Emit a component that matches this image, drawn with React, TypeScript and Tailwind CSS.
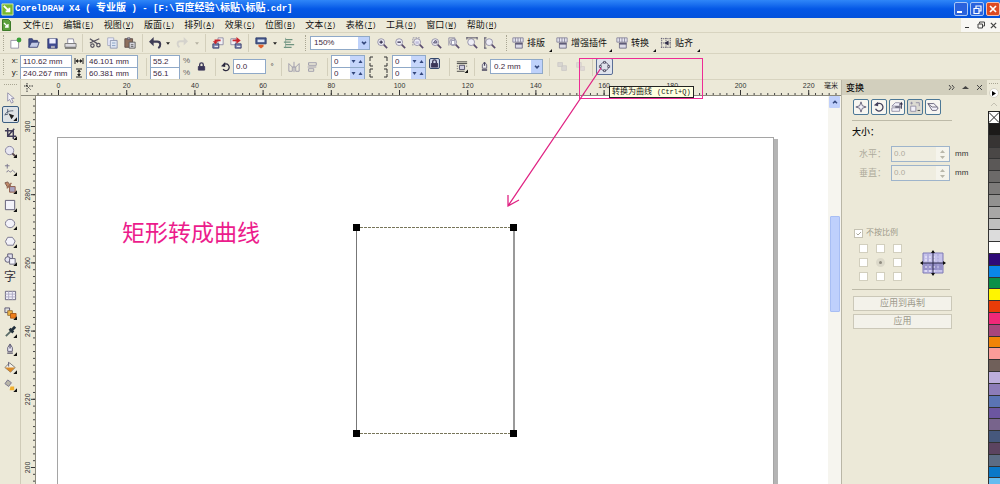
import React, { useState } from "react";

const menus = [
  ["文件", "F"],
  ["编辑", "E"],
  ["视图", "V"],
  ["版面", "L"],
  ["排列", "A"],
  ["效果", "C"],
  ["位图", "B"],
  ["文本", "X"],
  ["表格", "T"],
  ["工具", "O"],
  ["窗口", "W"],
  ["帮助", "H"],
];

const swatches = [
  "#1c1a19",
  "#373433",
  "#4a4746",
  "#5b5857",
  "#6c6a69",
  "#7d7b7a",
  "#929190",
  "#a8a7a6",
  "#c0c0bf",
  "#dcdcdc",
  "#ffffff",
  "#2f0a78",
  "#0a86e8",
  "#0a9048",
  "#fff500",
  "#e83c08",
  "#f02878",
  "#a8467c",
  "#f08408",
  "#fa9c98",
  "#70605a",
  "#bcaedc",
  "#8c7cb8",
  "#5a74b4",
  "#6c56a0",
  "#78648c",
  "#46587c",
  "#5c4460",
  "#5c6c84",
  "#0a78c8",
  "#64bcf0",
];

// Small drawing helpers

type IconProps = { children: React.ReactNode; size?: string; box?: string };

function Icon({ children, size = "size-[14px]", box = "0 0 14 14" }: IconProps) {
  return (
    <svg viewBox={box} className={`${size} shrink-0 overflow-visible`} fill="none" stroke="#5b5872" aria-hidden="true">
      {children}
    </svg>
  );
}

function Tool({ label, children, width = "w-[18px]" }: { label: string; children: React.ReactNode; width?: string }) {
  return (
    <button type="button" aria-label={label} className={`${width} h-[18px] shrink-0 flex items-center justify-center`}>
      {children}
    </button>
  );
}

function Sep() {
  return <span className="w-px h-[18px] mx-[3px] shrink-0 bg-[#d3cfbb]" />;
}

function Grip() {
  return <span className="h-[16px] mx-[3px] shrink-0 border-l border-dotted border-[#a9a693]" />;
}

function Caret({ faded }: { faded?: boolean }) {
  return (
    <svg viewBox="0 0 5 3" className="w-[4px] h-[3px] shrink-0" aria-hidden="true">
      <path d="M0 0h5L2.5 3z" fill={faded ? "#b5b2a2" : "#222"} />
    </svg>
  );
}

const tri = <path d="M14 10v4h-4z" fill="#111" stroke="none" />;

const magnifier = (
  <>
    <circle cx="6" cy="6" r="4" fill="#eeedf6" stroke="#8d8aa2" />
    <path d="M9 9l4 4" stroke="#5c4f70" strokeWidth="2" />
  </>
);

function ZoomTool({ label, children }: { label: string; children: React.ReactNode }) {
  return (
    <Tool label={label}>
      <Icon size="size-[12px]">
        {magnifier}
        {children}
      </Icon>
    </Tool>
  );
}

const gridIcon = (
  <Icon size="size-[12px]">
    <path d="M1 1h12v5H1z" fill="#e6e6ef" stroke="#85829a" />
    <path d="M4 1v5M7 1v5M10 1v5" stroke="#85829a" />
    <path d="M4 7h8v6H4z" fill="#dcdbe8" stroke="#6c6984" />
    <path d="M4 8h8" stroke="#4a4766" strokeWidth="1.5" />
  </Icon>
);

// Title bar and menu

function TitleBar() {
  return (
    <header className="h-[18px] shrink-0 flex items-center pl-px bg-linear-to-b from-[#2f86f8] via-[#0457e6] to-[#0352dc]">
      <Icon size="size-[13px]">
        <path d="M1 1h12v12H1z" fill="#7ab82e" stroke="#d8efb0" />
        <path d="M3 3l6 6M9 5v4H5" stroke="#fff" strokeWidth="2" />
      </Icon>
      <h1 className="flex-1 pl-px flex items-center whitespace-pre font-['Liberation_Mono','Noto_Sans_CJK_SC',monospace] font-bold text-[9px] leading-[14px] text-white">
        CorelDRAW X4 ( <span className="text-[10px]">专业版</span> ) - [F:\<span className="text-[10px]">百度经验</span>\
        <span className="text-[10px]">标贴</span>\<span className="text-[10px]">标贴</span>.cdr]
      </h1>
      <div className="flex gap-[2px]">
        <button type="button" aria-label="最小化" className="size-[14px] rounded-[2px] border border-[#a9c6f5] bg-[#2a62dd] flex items-end p-[2px]">
          <span className="w-[5px] h-[2px] bg-white" />
        </button>
        <button type="button" aria-label="还原" className="size-[14px] rounded-[2px] border border-[#a9c6f5] bg-[#2a62dd] flex items-center justify-center">
          <Icon size="size-[9px]" box="0 0 9 9">
            <path d="M3 3V1h5v5H6M1 3.5h5v5H1z" stroke="#fff" strokeWidth="1.2" />
          </Icon>
        </button>
        <button type="button" aria-label="关闭" className="size-[14px] rounded-[2px] border border-[#f3c0b0] bg-[#dd4a22] flex items-center justify-center">
          <Icon size="size-[8px]" box="0 0 8 8">
            <path d="M1 1l6 6M7 1L1 7" stroke="#fff" strokeWidth="1.7" />
          </Icon>
        </button>
      </div>
    </header>
  );
}

function MenuBar() {
  return (
    <nav className="h-[15px] shrink-0 flex items-center border-b border-[#d8d4c0]">
      <Icon size="w-[9px] h-[12px] ml-[2px]" box="0 0 9 12">
        <path d="M.5 .5h6l2 2v9h-8z" fill="#5ca03c" stroke="#3c7a28" />
        <path d="M2 4l4 4M6 5v3H3" stroke="#fff" strokeWidth="1.3" />
      </Icon>
      <div className="ml-[12px] w-[484px] grid grid-cols-12">
        {menus.map(([name, key]) => (
          <button key={key} type="button" className="flex items-center text-[9px] leading-[14px] text-[#111]">
            {name}
            <span className="font-['Liberation_Mono',monospace] text-[7px]">
              (<u>{key}</u>)
            </span>
          </button>
        ))}
      </div>
      <div className="ml-auto h-full flex bg-[#f8f7f3]">
        <button type="button" aria-label="最小化文档" className="w-[13px] flex items-center justify-center">
          <Icon size="size-[8px]" box="0 0 8 8">
            <path d="M1 6.5h4" stroke="#333" />
          </Icon>
        </button>
        <button type="button" aria-label="还原文档" className="w-[13px] flex items-center justify-center">
          <Icon size="size-[8px]" box="0 0 8 8">
            <path d="M2.5 2.5V1h5v4H6M1 3h4.500v4H1z" stroke="#444" />
          </Icon>
        </button>
        <button type="button" aria-label="关闭文档" className="w-[13px] flex items-center justify-center">
          <Icon size="size-[7px]" box="0 0 8 8">
            <path d="M1 1l6 6M7 1L1 7" stroke="#444" strokeWidth="1.5" />
          </Icon>
        </button>
      </div>
    </nav>
  );
}

// Standard toolbar

function StandardBar() {
  const [zoom, setZoom] = useState("150%");

  return (
    <div className="h-[21px] shrink-0 flex items-center border-b border-[#d8d4c0]">
      <Grip />
      <Tool label="新建">
        <Icon size="size-[12px]">
          <path d="M1 4h9v9H1z" fill="#fff" stroke="#8d8aa0" />
          <circle cx="10.500" cy="3.500" r="2.800" fill="#3da03a" stroke="none" />
        </Icon>
      </Tool>
      <Tool label="打开">
        <Icon size="size-[12px]">
          <path d="M1 12V2h4l1 2h5v2" fill="#44518c" stroke="#333c70" />
          <path d="M1 12l3-6h9l-2 6z" fill="#c3cbe6" stroke="#333c70" />
        </Icon>
      </Tool>
      <Tool label="保存">
        <Icon size="size-[11px]">
          <path d="M1 1h12v12H1z" fill="#3f4a92" stroke="#2b3468" />
          <path d="M3 1h8v6H3z" fill="#eef" stroke="none" />
          <path d="M5 10h5v3H5z" fill="#aab" stroke="none" />
        </Icon>
      </Tool>
      <Tool label="打印">
        <Icon size="size-[13px]">
          <path d="M4 7V2h6l1 5" fill="#fff" stroke="#8d8aa0" />
          <path d="M1 7h12v4H1z" fill="#dddce0" stroke="#777" />
          <path d="M1 12h12" stroke="#444" />
        </Icon>
      </Tool>
      <Sep />
      <Tool label="剪切" width="w-[17px]">
        <Icon size="size-[12px]">
          <path d="M1 2l9 6M1 7l11-5" stroke="#55525f" strokeWidth="1.5" />
          <circle cx="4" cy="10" r="2" stroke="#55525f" strokeWidth="1.400" />
          <circle cx="11" cy="9.500" r="2" stroke="#55525f" strokeWidth="1.400" />
        </Icon>
      </Tool>
      <Tool label="复制">
        <Icon size="size-[12px]">
          <path d="M2 1h7v9H2z" fill="#eef" stroke="#a3a9bd" />
          <path d="M5 4h8v9H5z" fill="#dfe6f2" stroke="#8791ab" />
          <path d="M7 7h4M7 10h4" stroke="#7f9cc0" />
        </Icon>
      </Tool>
      <Tool label="粘贴">
        <Icon size="size-[12px]">
          <path d="M1 2h9v10H1z" fill="#8d6f5c" stroke="#5c4c48" />
          <path d="M4 1h3v2H4z" fill="#bbb" />
          <path d="M6 6h7v7H6z" fill="#d8d8df" stroke="#555" />
          <path d="M8 9h3M8 11h3" stroke="#555" />
        </Icon>
      </Tool>
      <Sep />
      <Tool label="撤销">
        <Icon size="size-[13px]">
          <path d="M3 5h6c4 0 4 5 1 7" stroke="#3e3c55" strokeWidth="2.200" />
          <path d="M0 5l5-5v10z" fill="#3e3c55" stroke="none" />
        </Icon>
      </Tool>
      <Tool label="撤销列表" width="w-[8px]">
        <Caret />
      </Tool>
      <Tool label="重做" width="w-[20px]">
        <Icon size="size-[12px]">
          <path d="M11 5H5C1 5 1 10 4 12" stroke="#d4d2cc" strokeWidth="2.200" />
          <path d="M14 5L9 0v10z" fill="#d4d2cc" stroke="none" />
        </Icon>
      </Tool>
      <Tool label="重做列表" width="w-[10px]">
        <Caret faded />
      </Tool>
      <Sep />
      <Tool label="导入">
        <Icon size="size-[12px]">
          <path d="M7 1h6v8H7z" fill="#f1f0f5" stroke="#8b88a0" />
          <path d="M1 8h7v5H1z" fill="#8088b0" stroke="#353c6c" />
          <path d="M3 11h4" stroke="#fff" />
          <path d="M10 4H4v2" stroke="#c8242c" strokeWidth="2" />
          <path d="M1 5h6L4 8.500z" fill="#c8242c" stroke="none" />
        </Icon>
      </Tool>
      <Tool label="导出">
        <Icon size="size-[12px]">
          <path d="M1 2h6v7H1z" fill="#f1f0f5" stroke="#8b88a0" />
          <path d="M6 8h7v5H6z" fill="#8088b0" stroke="#353c6c" />
          <path d="M8 11h4" stroke="#fff" />
          <path d="M3 4h6" stroke="#c8242c" strokeWidth="2" />
          <path d="M7.500 0l5 4-5 4z" fill="#c8242c" stroke="none" />
        </Icon>
      </Tool>
      <Sep />
      <Tool label="应用程序启动器">
        <Icon size="size-[12px]">
          <path d="M1 1h12v7H1z" fill="#46598c" stroke="#2d3c6c" />
          <path d="M3 3h8v3H3z" fill="#dbe6f6" stroke="none" />
          <path d="M4 9h6v2L7 13.500 4 11z" fill="#e0602c" stroke="none" />
        </Icon>
      </Tool>
      <Tool label="启动器列表" width="w-[10px]">
        <Caret />
      </Tool>
      <Tool label="选项">
        <Icon size="size-[12px]">
          <path d="M3 1v12" stroke="#8fa89a" />
          <path d="M3 3h8M1 6h8M3 9h10M1 12h9" stroke="#6f9480" strokeWidth="1.400" />
        </Icon>
      </Tool>
      <span className="w-[4px]" />
      <Grip />
      <div className="relative w-[60px] h-[14px] shrink-0 ml-px border border-[#8fa9c8] bg-white">
        <select
          aria-label="缩放级别"
          value={zoom}
          onChange={(e) => setZoom(e.target.value)}
          className="block w-full h-full appearance-none pl-[3px] text-[8px] leading-[12px] text-[#3c2840]"
        >
          <option>100%</option>
          <option>150%</option>
          <option>200%</option>
        </select>
        <DropArrow />
      </div>
      <span className="w-[3px]" />
      <ZoomTool label="放大">
        <path d="M4 6h4M6 4v4" stroke="#35304f" strokeWidth="1.500" />
      </ZoomTool>
      <ZoomTool label="缩小">
        <path d="M4 6h4" stroke="#35304f" strokeWidth="1.500" />
      </ZoomTool>
      <ZoomTool label="缩放选定范围">
        <path d="M1 10V1h9" stroke="#8886a0" strokeDasharray="2 1" />
        <path d="M4 5h4v3H4z" fill="#c3c0dc" stroke="none" />
      </ZoomTool>
      <ZoomTool label="缩放全部对象">
        <path d="M4 7l2-3 2 1v2z" fill="#9c98bc" />
      </ZoomTool>
      <ZoomTool label="显示页面">
        <path d="M1 10V1h7v3" stroke="#8886a0" />
        <path d="M4 4h4v5H4z" fill="#fff" stroke="#8886a0" />
      </ZoomTool>
      <ZoomTool label="按页宽显示">
        <path d="M1 1h12M1 0v3M13 0v3" stroke="#403d58" />
      </ZoomTool>
      <ZoomTool label="按页高显示">
        <path d="M1 1v12M0 1h3M0 13h3" stroke="#403d58" />
      </ZoomTool>
      <span className="w-[4px]" />
      <Grip />
      <TextTool label="排版" width="w-[44px]" icon={gridIcon} />
      <TextTool label="增强插件" width="w-[60px]" icon={gridIcon} />
      <TextTool label="转换" width="w-[44px]" icon={gridIcon} />
      <TextTool
        label="贴齐"
        width="w-[44px]"
        icon={
          <Icon size="size-[12px]">
            <path d="M2 1v12M7 1v12M12 1v12M1 2h12M1 7h12M1 12h12" stroke="#56536a" strokeDasharray="1.500 1" />
            <path d="M5 7l5-3v6z" fill="#302d48" stroke="none" />
          </Icon>
        }
      />
    </div>
  );
}

function TextTool({ label, width, icon }: { label: string; width: string; icon: React.ReactNode }) {
  return (
    <button type="button" className={`${width} h-[18px] shrink-0 relative flex items-center gap-[3px] pl-[2px] text-[9px] leading-[12px] text-[#111] whitespace-nowrap`}>
      {icon}
      {label}
      <svg viewBox="0 0 3 3" className="absolute right-[2px] bottom-0 size-[3px]" aria-hidden="true">
        <path d="M3 0v3H0z" fill="#111" />
      </svg>
    </button>
  );
}

function DropArrow() {
  return (
    <span className="absolute right-0 top-0 bottom-0 w-[11px] flex items-center justify-center bg-[#bfd2fb] pointer-events-none">
      <svg viewBox="0 0 7 5" className="w-[6px] h-[4px]" fill="none" aria-hidden="true">
        <path d="M1 1l2.500 2.500L6 1" stroke="#33477c" strokeWidth="2" />
      </svg>
    </span>
  );
}

// Property bar

function Field({ label, value, width = "w-[52px]" }: { label: string; value: string; width?: string }) {
  return (
    <input
      type="text"
      aria-label={label}
      defaultValue={value}
      className={`${width} h-[13px] -mb-px shrink-0 border border-[#8fa9c8] bg-white pl-[2px] text-[8px] leading-[11px] text-[#3c2840]`}
    />
  );
}

function Spin({ label }: { label: string }) {
  return (
    <div className="w-[34px] h-[13px] -mb-px flex border border-[#8fa9c8] bg-white">
      <input type="text" aria-label={label} defaultValue="0" className="flex-1 min-w-0 pl-[2px] text-[8px] leading-[11px] text-[#3c2840]" />
      <button type="button" aria-label={`${label}减`} className="w-[7px] flex items-center justify-center bg-[#c6d6fb]">
        <svg viewBox="0 0 4 3" className="w-[5px] h-[3px]">
          <path d="M0 0h4L2 3z" fill="#33477c" />
        </svg>
      </button>
      <button type="button" aria-label={`${label}加`} className="w-[7px] flex items-center justify-center bg-[#c6d6fb]">
        <svg viewBox="0 0 4 3" className="w-[5px] h-[3px]">
          <path d="M0 3h4L2 0z" fill="#33477c" />
        </svg>
      </button>
    </div>
  );
}

const lockIcon = (
  <Icon size="size-[9px]" box="0 0 10 10">
    <path d="M3 5V3a2 2 0 014 0v2" stroke="#3a3658" strokeWidth="1.500" />
    <path d="M1.500 5h7v4h-7z" fill="#3a3658" stroke="#3a3658" />
  </Icon>
);

function PropertyBar() {
  const [width, setWidth] = useState("0.2 mm");

  return (
    <div className="h-[25px] shrink-0 flex items-center text-[8px] leading-[12px] text-[#222]">
      <Grip />
      <div className="w-[13px] pr-[2px] text-right">
        <p>x:</p>
        <p>y:</p>
      </div>
      <div className="flex flex-col">
        <Field label="x 位置" value="110.62 mm" />
        <Field label="y 位置" value="240.267 mm" />
      </div>
      <div className="w-[14px] flex flex-col items-center gap-[2px]">
        <Icon size="size-[10px]" box="0 0 10 10">
          <path d="M1 2v6M9 2v6M2 5h6" stroke="#222" />
          <path d="M1.500 5l2.500-2v4zM8.500 5L6 3v4z" fill="#222" stroke="none" />
        </Icon>
        <Icon size="size-[10px]" box="0 0 10 10">
          <path d="M2 1h6M2 9h6M5 2v6" stroke="#222" />
          <path d="M5 1.500L3 4h4zM5 8.500L3 6h4z" fill="#222" stroke="none" />
        </Icon>
      </div>
      <div className="flex flex-col">
        <Field label="宽度" value="46.101 mm" />
        <Field label="高度" value="60.381 mm" />
      </div>
      <span className="w-[5px]" />
      <Sep />
      <div className="flex flex-col">
        <Field label="水平缩放" value="55.2" width="w-[30px]" />
        <Field label="垂直缩放" value="56.1" width="w-[30px]" />
      </div>
      <div className="w-[13px] text-center text-[#666]">
        <p>%</p>
        <p>%</p>
      </div>
      <Tool label="锁定比例" width="w-[16px]">
        {lockIcon}
      </Tool>
      <span className="w-[3px]" />
      <Sep />
      <Tool label="旋转角度" width="w-[14px]">
        <Icon size="size-[10px]" box="0 0 12 12">
          <path d="M3 3.500a4 4 0 11-.5 5" stroke="#2c2a40" strokeWidth="1.500" />
          <path d="M0 5l5 1V0z" fill="#2c2a40" stroke="none" />
        </Icon>
      </Tool>
      <input
        type="text"
        aria-label="角度"
        defaultValue="0.0"
        className="w-[33px] h-[15px] border border-[#8fa9c8] bg-white pl-[2px] text-[8px] leading-[13px] text-[#3c2840]"
      />
      <span className="w-[12px] text-center">°</span>
      <Sep />
      <Tool label="水平镜像">
        <Icon size="size-[12px]">
          <path d="M1 3v9h4V7zM13 3v9H9V7zM7 1v12" stroke="#9694a6" />
          <path d="M5 7h4" stroke="#9694a6" />
        </Icon>
      </Tool>
      <Tool label="垂直镜像">
        <Icon size="size-[12px]">
          <path d="M2 7h10M3 2h9v3H3zM3 9h6v3H3z" stroke="#9694a6" />
        </Icon>
      </Tool>
      <span className="w-[3px]" />
      <Sep />
      <div className="flex flex-col">
        <Spin label="左上角圆滑度" />
        <Spin label="左下角圆滑度" />
      </div>
      <div className="w-[27px] flex justify-between px-[4px]">
        <Icon size="w-[4px] h-[22px]" box="0 0 4 22">
          <path d="M4 1H1v4M1 7v3h3M4 13H1v4M1 18v3h3" stroke="#333" />
        </Icon>
        <Icon size="w-[4px] h-[22px]" box="0 0 4 22">
          <path d="M0 1h3v4M3 7v3H0M0 13h3v4M3 18v3H0" stroke="#333" />
        </Icon>
      </div>
      <div className="flex flex-col">
        <Spin label="右上角圆滑度" />
        <Spin label="右下角圆滑度" />
      </div>
      <button type="button" aria-label="全部圆角" className="size-[11px] ml-[3px] mb-[6px] shrink-0 rounded-[2px] border border-[#34476c] bg-[#cfd8ea] flex items-center justify-center">
        {lockIcon}
      </button>
      <span className="w-[6px]" />
      <Sep />
      <Tool label="文本换行">
        <Icon size="size-[12px]">
          <path d="M1 1h12M1 3h12M1 12h9M1 6h1M1 9h1M12 6h1" stroke="#333" />
          <path d="M4 5h6v5H4z" fill="#cfcde0" stroke="#44415c" />
          {tri}
        </Icon>
      </Tool>
      <Sep />
      <Tool label="轮廓笔" width="w-[12px]">
        <Icon size="w-[7px] h-[11px]" box="0 0 8 12">
          <path d="M4 1L1.500 4v4h5V4z" fill="#eee" />
          <path d="M1 10h6M4 1v4" stroke="#44415c" strokeWidth="1.500" />
        </Icon>
      </Tool>
      <div className="relative w-[53px] h-[15px] shrink-0 border border-[#8fa9c8] bg-white">
        <select
          aria-label="轮廓宽度"
          value={width}
          onChange={(e) => setWidth(e.target.value)}
          className="block w-full h-full appearance-none pl-[3px] text-[8px] leading-[13px] text-[#3c2840]"
        >
          <option>0.1 mm</option>
          <option>0.2 mm</option>
          <option>0.5 mm</option>
        </select>
        <DropArrow />
      </div>
      <span className="w-[3px]" />
      <Sep />
      <Tool label="到图层前面">
        <Icon size="size-[11px]">
          <path d="M1 2h6v5H1zM6 6h6v6H6z" fill="#d9d6d2" stroke="#cbc8c6" />
        </Icon>
      </Tool>
      <Tool label="到图层后面">
        <Icon size="size-[11px]">
          <path d="M2 2h6v6H2zM7 7h5v5H7z" fill="#dfd9d6" stroke="#d5cecb" />
        </Icon>
      </Tool>
      <Sep />
      <button type="button" aria-label="转换为曲线" className="size-[17px] rounded-[2px] border border-[#5b6f96] bg-[#dfe3ec] flex items-center justify-center">
        <Icon size="size-[13px]">
          <circle cx="7" cy="7" r="4.500" stroke="#55526a" />
          <path d="M6 1.500h2v2H6zM6 10.500h2v2H6zM1.500 6h2v2h-2zM10.500 6h2v2h-2z" fill="#fff" stroke="#35324c" strokeWidth=".8" />
        </Icon>
      </button>
    </div>
  );
}

// Toolbox

function BoxTool({ label, flyout = true, active, children }: { label: string; flyout?: boolean; active?: boolean; children: React.ReactNode }) {
  return (
    <button
      type="button"
      aria-label={label}
      className={
        active
          ? "w-[17px] h-[17px] mb-px shrink-0 rounded-[2px] border border-[#3d5f82] bg-[#dfe3e6] flex items-center justify-center"
          : "w-[17px] h-[18px] shrink-0 flex items-center justify-center"
      }
    >
      <Icon size="size-[13px]">
        {children}
        {flyout && tri}
      </Icon>
    </button>
  );
}

function Toolbox() {
  return (
    <aside className="w-[21px] shrink-0 flex flex-col items-center border-r border-[#cfcbb8]">
      <span className="w-[13px] mt-[4px] mb-[3px] border-t border-dotted border-[#a9a693]" />
      <BoxTool label="挑选" flyout={false}>
        <path d="M4 2v9l2-2 2 4 2-1-2-4h3z" fill="#f2f1f8" stroke="#9592ac" />
      </BoxTool>
      <BoxTool label="形状" active>
        <path d="M1 8c1-4 4-5 9-5M4 1v5M1 7h3" stroke="#4e5c70" />
        <path d="M5 6l6 2-3 4z" fill="#222" stroke="none" />
      </BoxTool>
      <BoxTool label="裁剪">
        <path d="M4 1v9h9M1 4h9v9M11 2L4 10" stroke="#403c58" strokeWidth="1.600" />
      </BoxTool>
      <BoxTool label="缩放">
        <circle cx="6" cy="6" r="4.500" fill="#e8e7f2" stroke="#8683a0" />
        <path d="M9 9l4 4" stroke="#5a4a50" strokeWidth="2.200" />
      </BoxTool>
      <BoxTool label="手绘">
        <path d="M1 3h5M3.500 1v5M3 10c2-5 3 2 5-1s2 1 4 1" stroke="#77748c" />
      </BoxTool>
      <BoxTool label="智能填充">
        <path d="M1 2l3-1 3 4-3 2z" fill="#c08868" stroke="#7c5a4c" />
        <path d="M6 6h6v6H6z" fill="#a9a3c0" stroke="#8c5844" />
        <path d="M3 8l5-6" stroke="#9c6c54" strokeWidth="1.500" />
      </BoxTool>
      <BoxTool label="矩形">
        <path d="M1.500 1.500h10v10h-10z" fill="#f3f2fa" />
      </BoxTool>
      <BoxTool label="椭圆形">
        <ellipse cx="6.500" cy="7" rx="5" ry="4.500" fill="#f3f2fa" stroke="#77748c" />
      </BoxTool>
      <BoxTool label="多边形">
        <path d="M4 2.500h5l3 4-2 4.500H3.500L1.500 7z" fill="#f3f2fa" stroke="#77748c" />
      </BoxTool>
      <BoxTool label="基本形状">
        <path d="M4 1h5v5H4z" fill="#e3e2f0" />
        <circle cx="4" cy="7" r="3" fill="#e3e2f0" />
        <path d="M6 6h6v6H6z" fill="#f3f2fa" stroke="#66637c" />
      </BoxTool>
      <button type="button" aria-label="文本" className="w-[17px] h-[18px] shrink-0 text-[12px] leading-[18px] text-[#33303c]">
        字
      </button>
      <BoxTool label="表格" flyout={false}>
        <path d="M1.500 2.500h11v9h-11z" fill="#f3f2fa" stroke="#66637c" />
        <path d="M5 2.500v9M9 2.500v9M1.500 5.500h11M1.500 8.500h11" stroke="#aeabc4" />
      </BoxTool>
      <BoxTool label="交互式调和">
        <path d="M1 1h5v5H1z" fill="#ddd" />
        <path d="M4 4h5v5H4z" fill="#f0b848" stroke="#94703c" />
        <path d="M7 7h6v5H7z" fill="#ee7c18" stroke="#a85818" />
      </BoxTool>
      <BoxTool label="滴管">
        <path d="M2 12l6-6" stroke="#5a6c68" strokeWidth="2" />
        <path d="M6 4l4 4M8 6l4-4" stroke="#22303c" strokeWidth="3" />
      </BoxTool>
      <BoxTool label="轮廓">
        <path d="M6.500 1L4 5v4h5V5z" fill="#eceaf6" />
        <path d="M6.500 2v4M3.500 11h6" stroke="#55526a" strokeWidth="1.300" />
      </BoxTool>
      <BoxTool label="填充">
        <path d="M6 2l6 5-5 5-6-5z" fill="#f4f2ea" stroke="#777" />
        <path d="M1 7h11l-5 5z" fill="#d88a28" stroke="none" />
        <path d="M5 1v5" />
      </BoxTool>
      <BoxTool label="交互式填充">
        <path d="M4 1l4 3-3 4-4-3z" fill="#b8b5a8" stroke="#77748c" />
        <path d="M7 8h4v4H6z" fill="#f0b030" stroke="none" />
      </BoxTool>
    </aside>
  );
}

// Rulers: one major step is 20 mm, ten minor ticks in each

const STEP = 68.2;

function TopRuler() {
  const majors = Array.from({ length: 12 }, (_, i) => i);
  const minors = Array.from({ length: 118 }, (_, i) => i - 3);
  return (
    <div className="h-[16px] shrink-0 relative overflow-hidden border-b border-[#8b897c]">
      <svg className="block w-[819px] h-[16px]" aria-hidden="true">
        <path d="M6 3v9M3 6h9M5 5l5 5" stroke="#333" strokeDasharray="1.500 1" fill="none" />
        {minors.map((m) => (
          <path key={m} d={`M${37.5 + m * (STEP / 10)} 13v2`} stroke="#444" />
        ))}
        {majors.map((m) => (
          <g key={m}>
            <path d={`M${37.5 + m * STEP} 10v5`} stroke="#333" />
            <text x={37.5 + m * STEP} y="8" textAnchor="middle" fontSize="7" fill="#333">
              {m * 20}
            </text>
          </g>
        ))}
      </svg>
      <span className="absolute right-[2px] top-0 bg-[#ece9d8] px-px text-[7px] leading-[12px] text-[#222]">毫米</span>
    </div>
  );
}

function SideRuler() {
  const majors = Array.from({ length: 6 }, (_, i) => i);
  const minors = Array.from({ length: 60 }, (_, i) => i - 4);
  return (
    <svg className="w-[15px] h-full shrink-0 border-r border-[#8b897c]" aria-hidden="true">
      {minors.map((m) => (
        <path key={m} d={`M12 ${30.5 + m * (STEP / 10)}h2`} stroke="#444" />
      ))}
      {majors.map((m) => (
        <g key={m} transform={`translate(0 ${30.5 + m * STEP})`}>
          <path d="M10 0h4" stroke="#333" />
          <text transform="rotate(-90)" x="0" y="9" textAnchor="middle" fontSize="7" fill="#333">
            {300 - m * 20}
          </text>
        </g>
      ))}
    </svg>
  );
}

function Canvas() {
  return (
    <main className="flex-1 relative overflow-hidden bg-white">
      <div className="absolute left-[21px] top-[41px] -bottom-2 w-[717px] border border-[#a5a5a5] bg-white" />
      <div className="absolute left-[738px] top-[43px] -bottom-2 w-[4px] bg-[#b4b4b4]" />
      <p className="absolute left-[86px] top-[122px] text-[23px] leading-[30px] text-[#ec1c8c] whitespace-nowrap">矩形转成曲线</p>
      <svg className="absolute left-[316px] top-[126px] w-[166px] h-[216px]" fill="none" aria-hidden="true">
        <path d="M4.500 5v206" stroke="#777" />
        <path d="M162 5v206" stroke="#999" strokeWidth="2" />
        <path d="M4 5.500h158M4 211.500h158" stroke="#77755a" strokeDasharray="3 1" />
        <path d="M1 2h7v7H1zM158 2h7v7h-7zM1 208h7v7H1zM158 208h7v7h-7z" fill="#000" />
      </svg>
    </main>
  );
}

function ScrollBar() {
  return (
    <div className="w-[13px] shrink-0 flex flex-col items-center bg-[#f6f5ef]">
      <button type="button" aria-label="向上滚动" className="w-[11px] h-[12px] mb-[108px] rounded-[1px] bg-[#c0d0fb] flex items-center justify-center">
        <svg viewBox="0 0 7 5" className="w-[6px] h-[4px]" fill="none">
          <path d="M1 4l2.500-2.500L6 4" stroke="#33477c" strokeWidth="1.800" />
        </svg>
      </button>
      <div className="w-[10px] h-[96px] rounded-[1px] border border-[#a8bef4] bg-[#bfd0fc]" />
    </div>
  );
}

// Transformation docker

const dockTools = [
  { label: "位置", art: <path d="M7 1l1.500 4.500L13 7 8.500 8.500 7 13 5.500 8.500 1 7l4.500-1.500z" fill="#f3f2fa" /> },
  {
    label: "旋转",
    art: (
      <>
        <path d="M4 4a4.500 4.500 0 11-1 5" strokeWidth="1.500" stroke="#44415c" />
        <path d="M1 5l5 1V1z" fill="#44415c" stroke="none" />
      </>
    ),
  },
  {
    label: "缩放和镜像",
    art: (
      <>
        <path d="M1 6l4-4h5v4zM1 8h9v4H1z" fill="#f3f2fa" stroke="#8c89a0" />
        <path d="M5 7h6M12 3v6" stroke="#33304c" strokeWidth="1.300" />
        <path d="M12 1l2 3h-4z" fill="#33304c" stroke="none" />
      </>
    ),
  },
  {
    label: "大小",
    art: (
      <>
        <path d="M2 6h6v6H2z" fill="#f3f2fa" stroke="#8c89a0" />
        <path d="M3 1v3M1.500 2.500h3M8 2h4v4" stroke="#8c89a0" />
        <path d="M10 11h3" stroke="#333" />
      </>
    ),
  },
  { label: "倾斜", art: <path d="M1 3h7l5 5-2 3H6zM1 3l5 4h6" fill="#f3f2fa" /> },
];

function SizeRow({ id, label }: { id: string; label: string }) {
  return (
    <div className="flex items-center pl-[7px]">
      <label htmlFor={id} className="w-[32px] text-[9px] leading-[12px] text-[#aeab9c]">
        {label}：
      </label>
      <div className="w-[59px] h-[16px] flex border border-[#9eb4cb] bg-[#efede0]">
        <input id={id} type="text" defaultValue="0.0" disabled className="flex-1 min-w-0 pl-[2px] text-[8px] leading-[12px] text-[#aeab9c]" />
        <span className="w-[13px] flex flex-col items-center justify-center gap-[3px] bg-[#f5f4ec]">
          <svg viewBox="0 0 5 3" className="w-[5px] h-[3px]" aria-hidden="true">
            <path d="M0 3h5L2.500 0z" fill="#b9b7aa" />
          </svg>
          <svg viewBox="0 0 5 3" className="w-[5px] h-[3px]" aria-hidden="true">
            <path d="M0 0h5L2.500 3z" fill="#b9b7aa" />
          </svg>
        </span>
      </div>
      <span className="ml-[5px] text-[8px] leading-[12px] text-[#333]">mm</span>
    </div>
  );
}

function Docker() {
  return (
    <section className="w-[146px] shrink-0 border-l border-[#b9b6a6]">
      <header className="h-[15px] flex items-center pl-[4px] pr-[4px] bg-[#d2cfbd]">
        <h2 className="flex-1 text-[9px] leading-[12px] font-medium text-[#111]">变换</h2>
        <div className="flex gap-[7px]">
          <button type="button" aria-label="折叠">
            <Icon size="size-[7px]" box="0 0 7 7">
              <path d="M1 1l2 2.500L1 6M4 1l2 2.500L4 6" stroke="#444" />
            </Icon>
          </button>
          <button type="button" aria-label="卷起">
            <Icon size="size-[7px]" box="0 0 7 7">
              <path d="M0 5h7L3.500 2z" fill="#444" stroke="none" />
            </Icon>
          </button>
          <button type="button" aria-label="关闭泊坞窗">
            <Icon size="size-[7px]" box="0 0 7 7">
              <path d="M1 1l5 5M6 1L1 6" stroke="#444" />
            </Icon>
          </button>
        </div>
      </header>
      <div className="pl-[10px]">
        <div className="flex gap-[2px] pt-[4px] pl-px">
          {dockTools.map((tool) => (
            <button
              key={tool.label}
              type="button"
              aria-label={tool.label}
              className={
                tool.label === "大小"
                  ? "size-[16px] rounded-[2px] border border-[#4c7896] bg-[#dcdbd2] flex items-center justify-center"
                  : "size-[16px] rounded-[2px] border border-[#4c7896] bg-[#f7f6f1] flex items-center justify-center"
              }
            >
              <Icon size="size-[12px]">{tool.art}</Icon>
            </button>
          ))}
        </div>
        <hr className="w-[100px] mt-[5px] border-[#bdbaa8]" />
        <h3 className="mt-[5px] text-[9px] leading-[12px] font-medium text-[#111]">大小：</h3>
        <div className="mt-[8px] flex flex-col gap-[3px]">
          <SizeRow id="size-x" label="水平" />
          <SizeRow id="size-y" label="垂直" />
        </div>
        <label className="mt-[46px] flex items-center gap-[3px] pl-[2px] text-[8px] leading-[12px] text-[#9c998a]">
          <span className="relative size-[9px]">
            <input type="checkbox" defaultChecked disabled className="block size-[9px] appearance-none border border-[#c5c2b3] bg-white" />
            <svg viewBox="0 0 9 9" className="absolute inset-0 size-[9px] pointer-events-none" fill="none">
              <path d="M2.500 4.500l1.500 1.500L7 3" stroke="#a9a79a" />
            </svg>
          </span>
          不按比例
        </label>
        <div className="mt-[5px] ml-[7px] flex items-center">
          <fieldset disabled className="grid grid-cols-3 gap-x-[8px] gap-y-[5px]">
            {["左上", "上", "右上", "左", "中", "右", "左下", "下", "右下"].map((spot) => (
              <input
                key={spot}
                type="checkbox"
                aria-label={spot}
                className={
                  spot === "中"
                    ? "size-[9px] appearance-none rounded-full border-[3px] border-[#dcd9ca] bg-[#8f8c80]"
                    : "size-[9px] appearance-none border border-[#d2cfbe] bg-white"
                }
              />
            ))}
          </fieldset>
          <svg viewBox="0 0 26 26" className="size-[26px] ml-[18px]" aria-hidden="true">
            <path d="M3 3h20v20H3z" fill="#c6c2ea" stroke="#7d79b4" />
            <path d="M3 13h20v7H3z" fill="#9590c8" />
            <path d="M5 7h16M5 10h16M5 17h16M5 21h16" stroke="#f2f1ff" strokeDasharray="2 2" />
            <path d="M8 3v20M18 3v20" stroke="#a5a1d6" />
            <path d="M13 1v24M1 13h24" stroke="#2d2a4c" />
            <path d="M13 0l2 3h-4zM13 26l2-3h-4zM0 13l3-2v4zM26 13l-3-2v4z" fill="#111" />
          </svg>
        </div>
        <hr className="w-[98px] mt-[8px] mb-[6px] border-[#bdbaa8]" />
        <div className="w-[100px] flex flex-col gap-[3px] text-[9px] leading-[13px] text-[#9c998a]">
          <button type="button" disabled className="h-[15px] ml-px border border-[#cbc8b8] bg-[#f3f2ea] flex items-center justify-center">
            应用到再制
          </button>
          <button type="button" disabled className="h-[15px] ml-px border border-[#cbc8b8] bg-[#f3f2ea] flex items-center justify-center">
            应用
          </button>
        </div>
      </div>
    </section>
  );
}

function Palette() {
  return (
    <aside className="w-[13px] shrink-0 flex flex-col overflow-hidden">
      <span className="mt-[3px] mx-[2px] border-t border-dotted border-[#a9a693]" />
      <button type="button" aria-label="调色板菜单" className="mt-[4px] mx-auto size-[10px] shrink-0 rounded-full bg-white border border-[#d5d2c4] flex items-center justify-center">
        <Icon size="size-[5px]" box="0 0 5 5">
          <path d="M1 0l4 2.500L1 5z" fill="#000" stroke="none" />
        </Icon>
      </button>
      <button type="button" aria-label="向上" className="h-[13px] shrink-0 flex items-center justify-center">
        <Icon size="size-[6px]" box="0 0 6 6">
          <path d="M0 4l3-3 3 3" stroke="#c4c1b2" />
        </Icon>
      </button>
      <button type="button" aria-label="无填充" className="h-[13px] shrink-0 ml-px bg-white border border-[#222]">
        <svg viewBox="0 0 10 10" className="w-full h-full">
          <path d="M0 0l10 10M10 0L0 10" stroke="#222" />
        </svg>
      </button>
      <div className="flex-1 -mb-[6px] ml-px flex flex-col border-l border-[#333]">
        {swatches.map((color) => (
          <button key={color} type="button" aria-label={color} className="flex-1 min-h-0 border-b border-[#333]" style={{ backgroundColor: color }} />
        ))}
      </div>
    </aside>
  );
}

export default function App() {
  return (
    <div className="relative h-screen overflow-hidden flex flex-col bg-[#ece9d8] font-['Liberation_Sans','Noto_Sans_CJK_SC',sans-serif] text-[8px]">
      <TitleBar />
      <MenuBar />
      <StandardBar />
      <PropertyBar />
      <div className="flex-1 min-h-0 flex border-t border-[#d8d4c0]">
        <Toolbox />
        <div className="flex-1 min-w-0 flex flex-col">
          <TopRuler />
          <div className="flex-1 min-h-0 flex">
            <SideRuler />
            <Canvas />
            <ScrollBar />
          </div>
        </div>
        <Docker />
        <Palette />
      </div>

      {/* callout around the convert button */}
      <div className="absolute left-[579px] top-[58px] w-[124px] h-[41px] border border-[#ee2c94] pointer-events-none" />
      <svg className="absolute left-[500px] top-[60px] w-[110px] h-[155px] pointer-events-none" fill="none" stroke="#e02484" strokeWidth="1.300" aria-hidden="true">
        <path d="M101 8L8 146M8 135v11l11-6" />
      </svg>
      <div role="tooltip" className="absolute left-[609px] top-[86px] h-[12px] px-[2px] flex items-center gap-[5px] border border-[#222] bg-[#ffffe1] text-[8px] leading-[10px] text-[#111] whitespace-nowrap">
        转换为曲线 <span className="font-['Liberation_Mono',monospace] text-[7px]">(Ctrl+Q)</span>
      </div>
    </div>
  );
}
